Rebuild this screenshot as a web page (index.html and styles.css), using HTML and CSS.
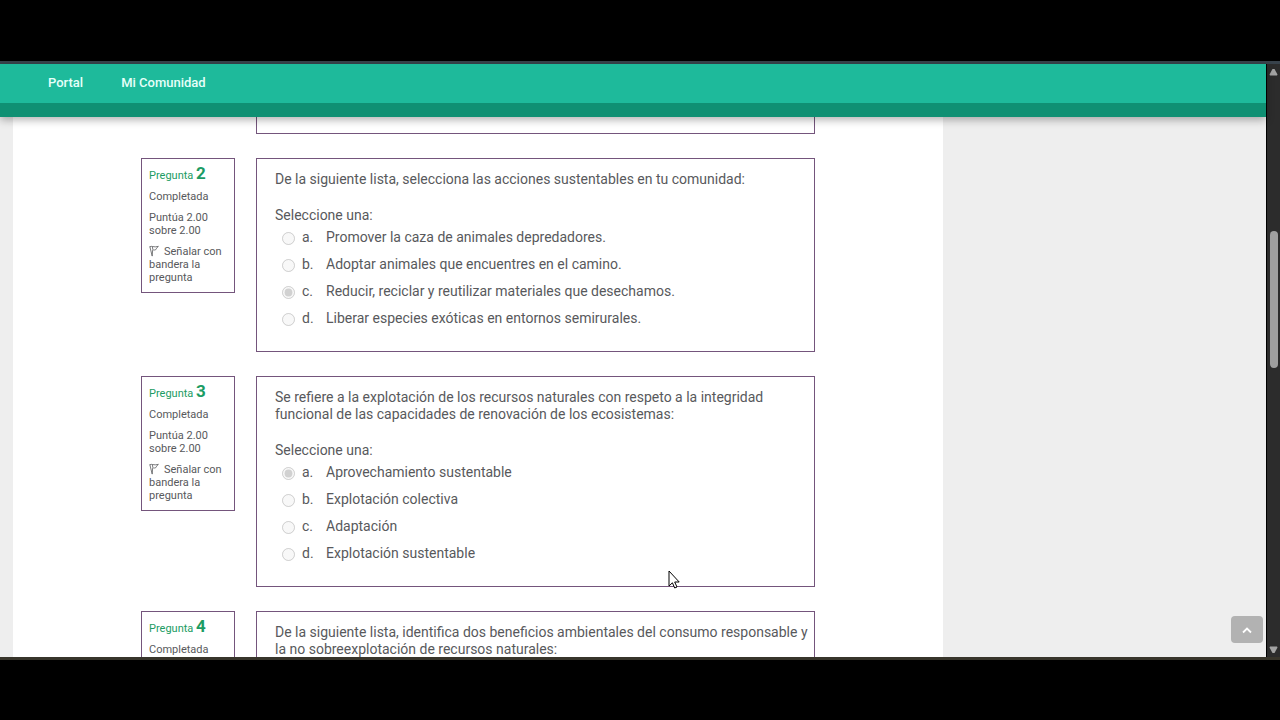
FILE: index.html
```
<!DOCTYPE html>
<html lang="es">
<head>
<meta charset="utf-8">
<meta name="viewport" content="width=device-width, initial-scale=1">
<title>Cuestionario</title>
<link rel="stylesheet" href="styles.css">
</head>
<body>
<svg class="sprite" aria-hidden="true">
  <symbol id="flag" viewBox="0 0 10 12">
    <path d="M.8 1.400 3.200 11.200M3.200 11 3.600 5.500M.8 1.800C2.600.4 4.600 2.800 9.400 1.400 7.600 2.600 7.600 3.600 6.600 4.800 5.200 5.400 4.200 4.400 3 5.400M3.400 2 3.800 4.400" fill="none" stroke="currentColor" stroke-width=".8"/>
  </symbol>
</svg>
<div class="window">
  <div class="view">
    <header class="header">
      <nav class="nav">
        <a href="#">Portal</a>
        <a href="#">Mi Comunidad</a>
      </nav>
      <div class="strip"></div>
    </header>
    <div class="scroll-area">
      <main class="page">
        <div class="previous"></div>

        <section class="question">
          <div class="info">
            <h3 class="number">Pregunta <b>2</b></h3>
            <p>Completada</p>
            <p>Puntúa 2.00 sobre 2.00</p>
            <a class="flag" href="#"><svg class="flag-icon"><use href="#flag"/></svg>Señalar con bandera la pregunta</a>
          </div>
          <div class="content">
            <p class="prompt">De la siguiente lista, selecciona las acciones sustentables en tu comunidad:</p>
            <p class="hint">Seleccione una:</p>
            <label class="option"><input type="radio" name="q2" disabled><span class="letter">a.</span><span>Promover la caza de animales depredadores.</span></label>
            <label class="option"><input type="radio" name="q2" disabled><span class="letter">b.</span><span>Adoptar animales que encuentres en el camino.</span></label>
            <label class="option"><input type="radio" name="q2" disabled checked><span class="letter">c.</span><span>Reducir, reciclar y reutilizar materiales que desechamos.</span></label>
            <label class="option"><input type="radio" name="q2" disabled><span class="letter">d.</span><span>Liberar especies exóticas en entornos semirurales.</span></label>
          </div>
        </section>

        <section class="question">
          <div class="info">
            <h3 class="number">Pregunta <b>3</b></h3>
            <p>Completada</p>
            <p>Puntúa 2.00 sobre 2.00</p>
            <a class="flag" href="#"><svg class="flag-icon"><use href="#flag"/></svg>Señalar con bandera la pregunta</a>
          </div>
          <div class="content">
            <p class="prompt">Se refiere a la explotación de los recursos naturales con respeto a la integridad funcional de las capacidades de renovación de los ecosistemas:</p>
            <p class="hint">Seleccione una:</p>
            <label class="option"><input type="radio" name="q3" disabled checked><span class="letter">a.</span><span>Aprovechamiento sustentable</span></label>
            <label class="option"><input type="radio" name="q3" disabled><span class="letter">b.</span><span>Explotación colectiva</span></label>
            <label class="option"><input type="radio" name="q3" disabled><span class="letter">c.</span><span>Adaptación</span></label>
            <label class="option"><input type="radio" name="q3" disabled><span class="letter">d.</span><span>Explotación sustentable</span></label>
          </div>
        </section>

        <section class="question">
          <div class="info">
            <h3 class="number">Pregunta <b>4</b></h3>
            <p>Completada</p>
          </div>
          <div class="content">
            <p class="prompt">De la siguiente lista, identifica dos beneficios ambientales del consumo responsable y la no sobreexplotación de recursos naturales:</p>
          </div>
        </section>
      </main>
    </div>
    <button class="to-top" type="button" aria-label="Volver arriba">
      <svg width="10" height="8" viewBox="0 0 10 8"><path d="M1 6.500 5 2.500 9 6.500" fill="none" stroke="#fff" stroke-width="1.800"/></svg>
    </button>
  </div>
  <div class="scrollbar">
    <svg width="9" height="8" viewBox="0 0 9 8"><path d="M3.500 1h2L8.500 6.500 8 7.500H1L.5 6.500Z" fill="#a3a3a3"/></svg>
    <div class="track"><div class="thumb"></div></div>
    <svg width="9" height="8" viewBox="0 0 9 8"><path d="M3.500 7h2L8.500 1.500 8 .5H1L.5 1.500Z" fill="#a3a3a3"/></svg>
  </div>
</div>
<svg class="cursor" width="12" height="20" viewBox="0 0 12 20"><path d="M1 1V16L4.400 12.800 6.700 18 9 17 6.700 12H11.200Z" fill="#fff" stroke="#000" stroke-width="1"/></svg>
</body>
</html>
```
FILE: styles.css
```
* { box-sizing: border-box; }

body {
  margin: 0;
  height: 100vh;
  padding: 61px 0 60px;
  overflow: hidden;
  background: #000;
  color: #58595c;
  font: 14px/17px Roboto, sans-serif;
}

h3, p { margin: 0; font-weight: 400; }
a { color: inherit; text-decoration: none; }
.sprite { position: absolute; width: 0; height: 0; }

.window {
  display: flex;
  height: 100%;
  border-top: 3px solid #38424b;
  border-bottom: 3px solid #38352b;
}

.view {
  position: relative;
  display: flex;
  flex: 1;
  flex-direction: column;
  min-width: 0;
  background: #eee;
}

.header {
  z-index: 1;
  background: #1eba9b;
  box-shadow: 0 3px 8px rgba(0, 0, 0, .3);
}

.nav {
  display: flex;
  gap: 38px;
  padding: 10px 48px 12px;
  color: #e6fff9;
  font-size: 13px;
  font-weight: 500;
}

.strip { height: 14px; background: #0f9073; }

.scroll-area {
  flex: 1;
  min-height: 0;
  overflow: hidden;
  padding: 0 323px 0 13px;
}

.page {
  display: flex;
  flex-direction: column;
  gap: 24px;
  padding: 0 128px;
  background: #fff;
}

.previous {
  height: 17px;
  margin-left: 115px;
  border: 1px solid #74557c;
  border-top: 0;
}

.question {
  display: grid;
  grid-template-columns: 94px minmax(0, 1fr);
  gap: 21px;
  align-items: start;
}

.info {
  display: flex;
  flex-direction: column;
  gap: 8px;
  padding: 8px 7px;
  border: 1px solid #74557c;
  font-size: 11px;
  line-height: 13px;
}

.number { color: #1c9c64; font-size: 11px; }
.number b { font-size: 17px; font-weight: 700; }
.flag-icon { width: 10px; height: 12px; margin-right: 5px; vertical-align: -2px; }

.content {
  padding: 12px 6px 19px 18px;
  border: 1px solid #74557c;
}

.prompt { margin-bottom: 19px; }

.option {
  display: flex;
  align-items: center;
  height: 27px;
}

.option input { width: 13px; height: 13px; margin: 2px 7px 0; }
.letter { width: 24px; }

.to-top {
  position: absolute;
  right: 3px;
  bottom: 14px;
  display: grid;
  place-items: center;
  width: 32px;
  height: 27px;
  padding: 0;
  border: 0;
  border-radius: 4px;
  background: #b2b2b2;
}

.scrollbar {
  display: flex;
  flex-direction: column;
  align-items: center;
  width: 14px;
  padding: 4px 0 3px;
  border-left: 1px solid #000;
  background: #2c2c2c;
}

.track { flex: 1; padding-top: 155px; }
.thumb { width: 8px; height: 137px; border-radius: 4px; background: #9f9f9f; }
.cursor { position: absolute; left: 668px; top: 570px; }
```
